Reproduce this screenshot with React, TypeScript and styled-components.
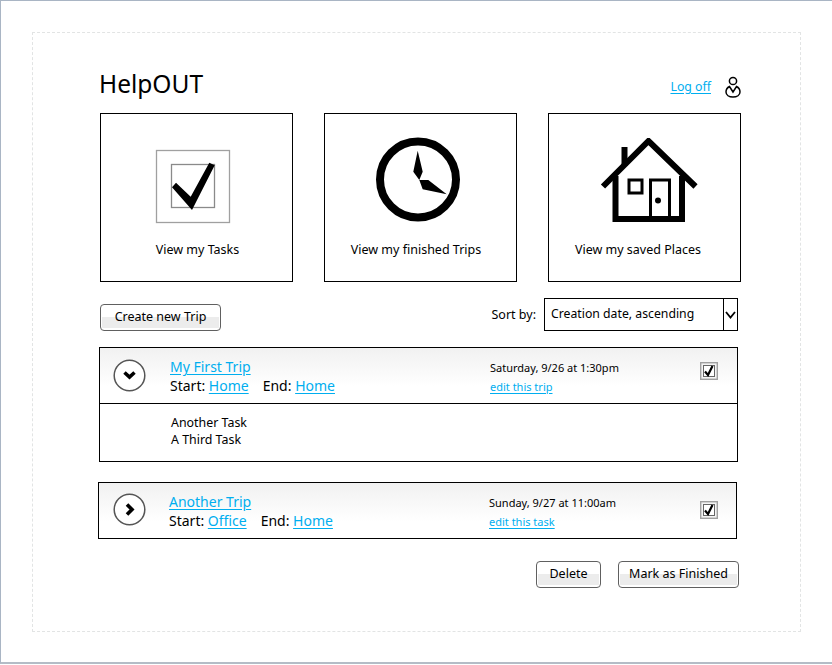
import styled, { createGlobalStyle } from "styled-components";

const GlobalStyle = createGlobalStyle`
  html, body {
    margin: 0;
    background: #ffffff;
  }
  body {
    font-family: "Noto Sans", "Open Sans", sans-serif;
    color: #000000;
  }
`;

const Window = styled.div`
  box-sizing: border-box;
  width: 832px;
  height: 664px;
  padding: 31px 31px 30px;
  border-top: 1px solid #a9b5c4;
  border-left: 1px solid #a9b5c4;
  border-bottom: 2px solid #b4bcc6;
`;

const Canvas = styled.div`
  box-sizing: border-box;
  width: 769px;
  height: 600px;
  padding: 35px 59px 0 67px;
  border: 1px dashed #e2e4e4;
`;

const Header = styled.header`
  box-sizing: border-box;
  display: flex;
  align-items: center;
  height: 45px;
  padding-bottom: 8px;
`;

const Title = styled.h1`
  flex: 1;
  margin: 0 0 6px -1px;
  font-size: 24.5px;
  font-weight: 400;
  line-height: 34px;
`;

const Link = styled.a<{ $size?: number }>`
  color: #00aeef;
  font-size: ${(p) => p.$size ?? 14}px;
  text-decoration: underline;
  text-underline-offset: 2px;
  cursor: pointer;
`;

const UserButton = styled.span`
  display: flex;
  margin-left: 14px;
`;

const Cards = styled.div`
  display: flex;
  gap: 31px;
`;

const Card = styled.div`
  box-sizing: border-box;
  display: flex;
  flex-direction: column;
  width: 193px;
  height: 169px;
  border: 1px solid #000000;
`;

const CardIcon = styled.div<{ $left: number; $top: number }>`
  height: 126px;
  padding: ${(p) => p.$top}px 0 0 ${(p) => p.$left}px;
  box-sizing: border-box;
  svg {
    display: block;
  }
`;

const CardLabel = styled.div<{ $shift: number }>`
  margin-left: ${(p) => p.$shift}px;
  text-align: center;
  font-size: 12.5px;
  line-height: 20px;
`;

const Toolbar = styled.div`
  display: flex;
  align-items: center;
  width: 638px;
  height: 33px;
  margin-top: 16px;
`;

const Button = styled.button<{ $width: number; $offset?: number }>`
  box-sizing: border-box;
  width: ${(p) => p.$width}px;
  height: 27px;
  margin-top: ${(p) => p.$offset ?? 0}px;
  padding: 0 0 2px;
  border: 1px solid #606060;
  border-radius: 4px;
  background: linear-gradient(#ffffff 0 48%, #ececec 48% 92%, #ffffff 92%);
  box-shadow: inset 0 0 0 1px #ffffff;
  color: #000000;
  font-family: inherit;
  font-size: 12.5px;
  cursor: pointer;
`;

const SortLabel = styled.span`
  margin: 0 8px 1px auto;
  font-size: 12.5px;
`;

const Select = styled.div`
  box-sizing: border-box;
  display: flex;
  width: 194px;
  height: 33px;
  border: 1px solid #000000;
`;

const SelectValue = styled.div`
  flex: 1;
  padding-left: 6px;
  font-size: 12.25px;
  line-height: 29px;
`;

const SelectArrow = styled.div`
  display: flex;
  align-items: center;
  justify-content: center;
  width: 13px;
  border-left: 1px solid #000000;
`;

const Trip = styled.section<{ $indent: number; $top: number }>`
  box-sizing: border-box;
  width: 639px;
  margin-top: ${(p) => p.$top}px;
  margin-left: ${(p) => p.$indent}px;
  border: 1px solid #000000;
`;

const TripHead = styled.div`
  box-sizing: border-box;
  display: grid;
  grid-template-columns: 70px 320px 210px 20px;
  align-items: start;
  height: 55px;
  background: linear-gradient(#f1f1f1, #ffffff 70%);
`;

const Toggle = styled.div<{ $top: number; $left: number }>`
  display: flex;
  margin: ${(p) => p.$top}px 0 0 ${(p) => p.$left}px;
`;

const TripInfo = styled.div`
  font-size: 14px;
  line-height: 19px;
  padding-top: 9px;
`;

const Ends = styled.div`
  display: flex;
  gap: 14px;
`;

const TripWhen = styled.div`
  font-size: 11px;
  line-height: 19px;
  padding-top: 10px;
`;

const Check = styled.div<{ $top: number; $left: number }>`
  display: flex;
  margin: ${(p) => p.$top}px 0 0 ${(p) => p.$left}px;
`;

const TripBody = styled.div`
  box-sizing: border-box;
  height: 58px;
  padding: 10px 0 0 71px;
  border-top: 1px solid #000000;
  font-size: 12.4px;
  line-height: 17px;
`;

const Actions = styled.div`
  display: flex;
  justify-content: flex-end;
  gap: 17px;
  width: 639px;
  margin-top: 22px;
`;

function UserIcon() {
  return (
    <svg width="16" height="22" viewBox="0 0 16 22" fill="none" stroke="#000" strokeWidth="1.5">
      <circle cx="8" cy="5" r="3.6" />
      <path d="M4.5 10.5C2.5 11.5 1 13.5 1 16c0 3 3 5 7 5s7-2 7-5c0-2.500-1.500-4.500-3.500-5.500L8 16Z" />
    </svg>
  );
}

function TaskIcon() {
  return (
    <svg width="76" height="75" viewBox="0 0 76 75">
      <rect x="1.500" y="1.500" width="73" height="72" fill="none" stroke="#a0a0a0" strokeWidth="1.300" />
      <rect x="16.500" y="15.500" width="43" height="43" fill="none" stroke="#8a8a8a" strokeWidth="1.300" />
      <path d="M21 33.700 35.700 47.700 54.300 13.700 59.700 16.300 37 61 17 38.300Z" fill="#000" />
    </svg>
  );
}

function ClockIcon() {
  return (
    <svg width="84" height="86" viewBox="0 0 84 86">
      <circle cx="42" cy="42.500" r="38" fill="none" stroke="#000" strokeWidth="8" />
      <path d="M41.700 13.700 46.700 34.700 43.300 43 37.300 34.700Z M43.300 43H52.300L70.700 57.300 46.700 52.300Z" fill="#000" />
    </svg>
  );
}

function HouseIcon() {
  return (
    <svg width="98" height="84" viewBox="0 0 98 84">
      <path d="M3 48.500 48.500 3 95.500 48.500" fill="none" stroke="#000" strokeWidth="6" />
      <path d="M24.500 28V9" fill="none" stroke="#000" strokeWidth="6" />
      <path d="M15.500 38V81H82V38" fill="none" stroke="#000" strokeWidth="6" />
      <rect x="29" y="42" width="13" height="13" fill="none" stroke="#000" strokeWidth="3" />
      <path d="M50.500 81V42H69.500V81" fill="none" stroke="#000" strokeWidth="3" />
      <circle cx="58" cy="62.500" r="3" fill="#000" />
    </svg>
  );
}

function ToggleIcon({ open }: { open: boolean }) {
  return (
    <svg width="33" height="33" viewBox="0 0 33 33">
      <circle cx="16.500" cy="16.500" r="15.300" fill="#fff" stroke="#555" strokeWidth="1.500" />
      <path
        d={open ? "M11.500 13.500 16.500 18 21.500 13.500" : "M14 11.500 19 16.500 14 21.500"}
        fill="none"
        stroke="#000"
        strokeWidth="3.600"
      />
    </svg>
  );
}

function SmallCheck() {
  return (
    <svg width="18" height="18" viewBox="0 0 18 18">
      <rect x="0.700" y="0.700" width="16.600" height="16.600" fill="#f4f4f4" stroke="#a0a0a0" strokeWidth="1.400" />
      <rect x="3.500" y="3.500" width="11" height="11" fill="#fff" stroke="#666" />
      <path d="M5 9.500 8 13 12.500 4" fill="none" stroke="#000" strokeWidth="2.200" />
    </svg>
  );
}

function Chevron() {
  return (
    <svg width="11" height="8" viewBox="0 0 11 8">
      <path d="M1 1 5.500 6.500 10 1" fill="none" stroke="#000" strokeWidth="1.800" />
    </svg>
  );
}

type TripData = {
  name: string;
  start: string;
  end: string;
  when: string;
  edit: string;
  tasks?: string[];
  indent: number;
  top: number;
  toggleTop: number;
  toggleLeft: number;
  checkTop: number;
  checkLeft: number;
};

const trips: TripData[] = [
  {
    name: "My First Trip",
    start: "Home",
    end: "Home",
    when: "Saturday, 9/26 at 1:30pm",
    edit: "edit this trip",
    tasks: ["Another Task", "A Third Task"],
    indent: -1,
    top: 16,
    toggleTop: 11,
    toggleLeft: 13,
    checkTop: 14,
    checkLeft: 0,
  },
  {
    name: "Another Trip",
    start: "Office",
    end: "Home",
    when: "Sunday, 9/27 at 11:00am",
    edit: "edit this task",
    indent: -2,
    top: 20,
    toggleTop: 10,
    toggleLeft: 14,
    checkTop: 18,
    checkLeft: 1,
  },
];

export default function App() {
  return (
    <Window>
      <GlobalStyle />
      <Canvas>
        <Header>
          <Title>HelpOUT</Title>
          <Link $size={12.3}>Log off</Link>
          <UserButton>
            <UserIcon />
          </UserButton>
        </Header>
        <Cards>
          <Card>
            <CardIcon $left={54} $top={35}>
              <TaskIcon />
            </CardIcon>
            <CardLabel $shift={2}>View my Tasks</CardLabel>
          </Card>
          <Card>
            <CardIcon $left={51} $top={23}>
              <ClockIcon />
            </CardIcon>
            <CardLabel $shift={-9}>View my finished Trips</CardLabel>
          </Card>
          <Card>
            <CardIcon $left={51} $top={24}>
              <HouseIcon />
            </CardIcon>
            <CardLabel $shift={-13}>View my saved Places</CardLabel>
          </Card>
        </Cards>
        <Toolbar>
          <Button $width={121} $offset={5}>
            Create new Trip
          </Button>
          <SortLabel>Sort by:</SortLabel>
          <Select>
            <SelectValue>Creation date, ascending</SelectValue>
            <SelectArrow>
              <Chevron />
            </SelectArrow>
          </Select>
        </Toolbar>
        {trips.map((trip) => (
          <Trip key={trip.name} $indent={trip.indent} $top={trip.top}>
            <TripHead>
              <Toggle $top={trip.toggleTop} $left={trip.toggleLeft}>
                <ToggleIcon open={!!trip.tasks} />
              </Toggle>
              <TripInfo>
                <Link>{trip.name}</Link>
                <Ends>
                  <span>
                    Start: <Link>{trip.start}</Link>
                  </span>
                  <span>
                    End: <Link>{trip.end}</Link>
                  </span>
                </Ends>
              </TripInfo>
              <TripWhen>
                <div>{trip.when}</div>
                <Link $size={11}>{trip.edit}</Link>
              </TripWhen>
              <Check $top={trip.checkTop} $left={trip.checkLeft}>
                <SmallCheck />
              </Check>
            </TripHead>
            {trip.tasks && (
              <TripBody>
                {trip.tasks.map((task) => (
                  <div key={task}>{task}</div>
                ))}
              </TripBody>
            )}
          </Trip>
        ))}
        <Actions>
          <Button $width={65}>Delete</Button>
          <Button $width={121}>Mark as Finished</Button>
        </Actions>
      </Canvas>
    </Window>
  );
}
